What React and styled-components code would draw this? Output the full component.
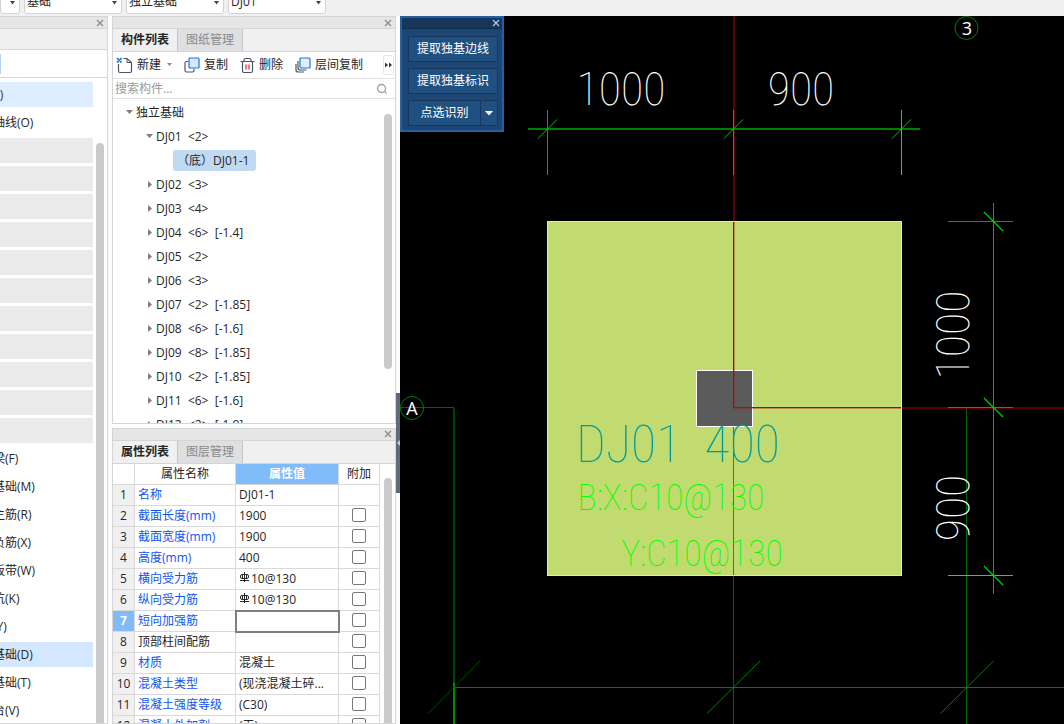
import React, { useState } from "react";
import styled, { createGlobalStyle, css } from "styled-components";

const GlobalStyle = createGlobalStyle`
  * {
    box-sizing: border-box;
  }
  body {
    margin: 0;
    background-color: #fdfdfd;
    color: #262626;
    font-family: "Open Sans", "Noto Sans CJK SC", sans-serif;
    font-size: 12px;
  }
  button, input, select {
    font: inherit;
    color: inherit;
    margin: 0;
    padding: 0;
  }
`;

const Pagina = styled.div`
  display: flex;
  flex-direction: column;
  height: 100vh;
  overflow: hidden;
`;

const BarraSuperior = styled.header`
  display: flex;
  align-items: flex-end;
  gap: 4px;
  height: 16px;
  flex-shrink: 0;
  padding-bottom: 2px;
  background-color: #f0f0f0;
  overflow: hidden;
`;

const Combo = styled.label`
  position: relative;
  width: ${({ $corto }) => ($corto ? "20px" : "98px")};
  height: 24px;
  flex-shrink: 0;
`;

const ComboSelect = styled.select`
  appearance: none;
  width: 100%;
  height: 24px;
  padding-left: 2px;
  line-height: 22px;
  border: 1px solid #d4d4d4;
  border-radius: 3px;
  background-color: white;
`;

const ComboFlecha = styled.svg`
  position: absolute;
  right: 5px;
  top: 11px;
  pointer-events: none;
`;

const Cuerpo = styled.div`
  display: flex;
  flex: 1;
  min-height: 0;
`;

const Navegador = styled.nav`
  display: flex;
  flex-direction: column;
  width: 108px;
  flex-shrink: 0;
  margin-right: 4px;
  border: 1px solid #d5d5d5;
  border-left: none;
  background-color: white;
`;

const FranjaTitulo = styled.div`
  display: flex;
  align-items: center;
  justify-content: flex-end;
  height: 11px;
  padding-right: 3px;
  flex-shrink: 0;
  background-color: #e6e6e6;
`;

const BotonCerrar = styled.button`
  display: flex;
  border: none;
  background: none;
  color: ${({ $color }) => $color || "#8c8c8c"};
`;

const FranjaGris = styled.div`
  height: 22px;
  flex-shrink: 0;
  border-top: 1px solid #d5d5d5;
  border-bottom: 1px solid #d5d5d5;
  background-color: #f0f0f0;
`;

const FranjaModo = styled.div`
  display: flex;
  align-items: center;
  height: 28px;
  flex-shrink: 0;
  border-bottom: 1px solid #d5d5d5;
`;

const Modo = styled.span`
  width: 1px;
  height: 20px;
  background-color: #b5d3f3;
`;

const ZonaLista = styled.div`
  display: flex;
  flex: 1;
  min-height: 0;
  overflow: hidden;
`;

const ListaNav = styled.ul`
  display: flex;
  flex-direction: column;
  gap: 3px;
  flex: 1;
  margin: 0;
  padding: 4px 0 0;
  list-style: none;
`;

const ItemNav = styled.li`
  height: 25px;
  flex-shrink: 0;
  line-height: 25px;
  text-indent: -7px;
  white-space: nowrap;
  overflow: hidden;
  background-color: ${({ $tipo }) =>
    ({ grupo: "#ebebeb", abierto: "#deedff", activo: "#d3e7ff" })[$tipo] || "white"};
  color: ${({ $tipo }) => ($tipo === "abierto" ? "#1d3557" : "#262626")};
`;

const Carril = styled.div`
  width: ${({ $ancho }) => $ancho || "11px"};
  flex-shrink: 0;
  padding: ${({ $arriba }) => $arriba}px 3px 0 0;
  display: flex;
  justify-content: flex-end;
`;

const Pulgar = styled.div`
  width: 8px;
  height: ${({ $alto }) => $alto || "calc(100% + 8px)"};
  border-radius: 4px;
  background-color: #cacaca;
`;

const Columna = styled.div`
  display: flex;
  flex-direction: column;
  gap: 4px;
  width: 284px;
  flex-shrink: 0;
`;

const Panel = styled.section`
  display: flex;
  flex-direction: column;
  min-height: 0;
  flex: ${({ $flex }) => $flex};
  border: 1px solid #d5d5d5;
  background-color: white;
  overflow: hidden;
`;

const Pestanas = styled.div`
  display: flex;
  height: 24px;
  flex-shrink: 0;
  border-top: 1px solid #d5d5d5;
  border-bottom: 1px solid #d5d5d5;
  background-color: #f0f0f0;
`;

const Pestana = styled.button`
  width: 65px;
  border: none;
  border-right: 1px solid #c4c6cc;
  background-color: ${({ $activa }) => ($activa ? "#f0f0f0" : "#dedfe1")};
  color: ${({ $activa }) => ($activa ? "#262626" : "#8a8a8a")};
  font-weight: ${({ $activa }) => ($activa ? 700 : 400)};
  line-height: 20px;
`;

const Herramientas = styled.div`
  display: flex;
  align-items: center;
  height: 27px;
  flex-shrink: 0;
  padding-left: 3px;
  border-bottom: 1px solid #e0e0e0;
`;

const Accion = styled.button`
  display: flex;
  align-items: center;
  gap: 4px;
  border: none;
  background: none;
  margin-right: 12px;
  line-height: 22px;
  white-space: nowrap;
`;

const BotonMas = styled.button`
  display: flex;
  align-items: center;
  justify-content: center;
  width: 11px;
  height: 20px;
  margin-left: auto;
  margin-right: 1px;
  border: 1px solid #e4e4e4;
  border-radius: 3px;
  background-color: white;
`;

const Buscador = styled.label`
  display: flex;
  align-items: center;
  height: 20px;
  flex-shrink: 0;
  padding: 0 7px 0 2px;
  border-bottom: 1px solid #e0e0e0;
`;

const CampoBusqueda = styled.input`
  flex: 1;
  min-width: 0;
  height: 18px;
  border: none;
  outline: none;
  background: none;
  &::placeholder {
    color: #9a9a9a;
    opacity: 1;
  }
`;

const Arbol = styled.ul`
  flex: 1;
  margin: 0;
  padding: 1px 0 0;
  list-style: none;
  white-space: pre;
`;

const Nodo = styled.li`
  display: flex;
  align-items: center;
  gap: 3px;
  height: 24px;
  padding-left: ${({ $nivel }) => 13 + $nivel * 20}px;
`;

const Marcado = styled.span`
  height: 21px;
  margin-left: 7px;
  padding: 0 7px 0 4px;
  border-radius: 3px;
  background-color: #c2d9f2;
  line-height: 21px;
`;

const Tabla = styled.table`
  flex: 1;
  width: 267px;
  border-collapse: separate;
  border-spacing: 0;
  table-layout: fixed;
  align-self: flex-start;
`;

const borde = css`
  border-right: 1px solid #d9d9d9;
  border-bottom: 1px solid #d9d9d9;
`;

const Encabezado = styled.th`
  ${borde}
  width: ${({ $ancho }) => $ancho};
  height: 21px;
  padding: 0;
  line-height: 18px;
  font-weight: ${({ $activo }) => ($activo ? 700 : 400)};
  color: ${({ $activo }) => ($activo ? "white" : "#262626")};
  background-color: ${({ $activo }) => ($activo ? "#80bbfa" : "white")};
`;

const Numero = styled.th`
  ${borde}
  height: 21px;
  padding: 0;
  line-height: 18px;
  font-weight: ${({ $activo }) => ($activo ? 700 : 400)};
  color: ${({ $activo }) => ($activo ? "white" : "#262626")};
  background-color: ${({ $activo }) => ($activo ? "#80bbfa" : "#f0f0f0")};
`;

const Celda = styled.td`
  ${borde}
  height: 21px;
  padding: 0 3px;
  line-height: 18px;
  white-space: nowrap;
  overflow: hidden;
  color: ${({ $azul }) => ($azul ? "#0f55f5" : "#262626")};
  ${({ $foco }) => $foco && "outline: 2px solid #7f7f7f; outline-offset: -1px;"}
`;

const CeldaCasilla = styled(Celda)`
  padding: 0 0 1px;
`;

const Casilla = styled.input`
  appearance: none;
  display: block;
  width: 14px;
  height: 14px;
  margin: 0 auto;
  border: 1px solid #777777;
  border-radius: 2px;
  background-color: white;
`;

const Varilla = styled.svg`
  margin-right: 1px;
  vertical-align: top;
`;

const Canal = styled.div`
  width: 4px;
  flex-shrink: 0;
`;

const Plegar = styled.button`
  display: flex;
  align-items: center;
  justify-content: flex-end;
  width: 4px;
  height: 100px;
  margin-top: 377px;
  border: none;
  background-color: #5f6b78;
`;

const Lienzo = styled.main`
  position: relative;
  flex: 1;
  min-width: 0;
  overflow: hidden;
  background-color: black;
`;

const Dibujo = styled.svg`
  position: absolute;
  inset: 0;
  width: 100%;
  height: 100%;
`;

const TextoPlano = styled.text`
  font-family: "Roboto Condensed", "Liberation Sans Narrow", Roboto, sans-serif;
  font-weight: 100;
  font-size: ${({ $size }) => $size}px;
  text-anchor: middle;
  white-space: pre;
`;

const TextoEje = styled.text`
  font-family: "Open Sans", sans-serif;
  font-size: 18px;
  text-anchor: middle;
  fill: white;
`;

const Flotante = styled.aside`
  position: absolute;
  left: 0;
  top: 0;
  width: 104px;
  border: 2px solid #2361a0;
  background-color: #1d4675;
`;

const FlotanteTitulo = styled.div`
  display: flex;
  align-items: center;
  justify-content: flex-end;
  height: 11px;
  padding-right: 2px;
  background-color: #17365a;
  border-bottom: 1px solid #122c4a;
`;

const FlotanteCuerpo = styled.div`
  display: flex;
  flex-direction: column;
  gap: 6px;
  padding: 7px 4px 4px 6px;
`;

const BotonFlotante = styled.button`
  height: 26px;
  border: 1px solid #17365a;
  background-color: #1f5080;
  color: white;
  line-height: 22px;
`;

const BotonDividido = styled.div`
  display: grid;
  grid-template-columns: 1fr 17px;
`;

const BotonFlecha = styled(BotonFlotante)`
  border-left: none;
  display: flex;
  align-items: center;
  justify-content: center;
`;

const GRUPOS = Array.from({ length: 11 }, () => ({ tipo: "grupo" }));

const NAVEGACION = [
  { texto: "(J)", tipo: "abierto" },
  { texto: "轴线(O)" },
  ...GRUPOS,
  { texto: "梁(F)" },
  { texto: "基础(M)" },
  { texto: "主筋(R)" },
  { texto: "负筋(X)" },
  { texto: "板带(W)" },
  { texto: "坑(K)" },
  { texto: "(Y)" },
  { texto: "基础(D)", tipo: "activo" },
  { texto: "基础(T)" },
  { texto: "台(V)" },
];

const COMPONENTES = [
  "DJ02  <3>",
  "DJ03  <4>",
  "DJ04  <6>  [-1.4]",
  "DJ05  <2>",
  "DJ06  <3>",
  "DJ07  <2>  [-1.85]",
  "DJ08  <6>  [-1.6]",
  "DJ09  <8>  [-1.85]",
  "DJ10  <2>  [-1.85]",
  "DJ11  <6>  [-1.6]",
  "DJ12  <2>  [-1.9]",
];

const PROPIEDADES = [
  { nombre: "名称", valor: "DJ01-1", azul: true, sinCasilla: true },
  { nombre: "截面长度(mm)", valor: "1900", azul: true },
  { nombre: "截面宽度(mm)", valor: "1900", azul: true },
  { nombre: "高度(mm)", valor: "400", azul: true },
  { nombre: "横向受力筋", valor: "10@130", azul: true, acero: true },
  { nombre: "纵向受力筋", valor: "10@130", azul: true, acero: true },
  { nombre: "短向加强筋", valor: "", azul: true, foco: true },
  { nombre: "顶部柱间配筋", valor: "" },
  { nombre: "材质", valor: "混凝土", azul: true },
  { nombre: "混凝土类型", valor: "(现浇混凝土碎...", azul: true },
  { nombre: "混凝土强度等级", valor: "(C30)", azul: true },
  { nombre: "混凝土外加剂", valor: "(无)", azul: true },
];

function Cerrar({ color }) {
  return (
    <BotonCerrar $color={color} aria-label="关闭">
      <svg width="8" height="8" viewBox="0 0 8 8" stroke="currentColor" strokeWidth="1.3">
        <path d="M1 1 7 7M7 1 1 7" />
      </svg>
    </BotonCerrar>
  );
}

function Triangulo({ abierto }) {
  return (
    <svg width="7" height="8" viewBox="0 0 7 8" fill="#7f7f7f">
      <path d={abierto ? "M0 2h7L3.5 6z" : "M2 1v7l4-3.5z"} />
    </svg>
  );
}

function IconoNuevo() {
  return (
    <svg width="17" height="17" viewBox="0 0 17 17" fill="none" stroke="#4c5563">
      <path d="M2.5 7v7q0 1.500 1.500 1.500h10q1.500 0 1.500-1.500V5.500L11 1.500H7.500" strokeWidth="1.200" />
      <path d="M11 1.500v4h4.500" />
      <path
        d="M1 1h1.500v1.500H1zM4 1h1.500v1.500H4zM2.500 2.500H4V4H2.500zM1 4h1.500v1.500H1zM4 4h1.500v1.500H4z"
        fill="#1673dd"
        stroke="#1673dd"
        strokeWidth=".4"
      />
    </svg>
  );
}

function IconoCopiar() {
  return (
    <svg width="16" height="16" viewBox="0 0 16 16" fill="none" strokeWidth="1.200">
      <path d="M4 4.500H2.500q-1.500 0-1.500 1.500v7.500Q1 15 2.500 15h6q1.500 0 1.500-1.500V12" stroke="#4c5563" />
      <rect x="5" y="1" width="10" height="10" rx="1" fill="#d6e8fd" stroke="#1673dd" />
    </svg>
  );
}

function IconoBorrar() {
  return (
    <svg width="15" height="17" viewBox="0 0 15 17" fill="none" stroke="#4c5563" strokeWidth="1.200">
      <path d="M.5 4.500h14M4 4.500V3q0-1.500 1.500-1.500h4Q11 1.500 11 3v1.500M2.500 4.500V14q0 1.500 1.500 1.500h7q1.500 0 1.500-1.500V4.500" />
      <path d="M6 7.500v5M9 7.500v5" stroke="#e02020" />
    </svg>
  );
}

function IconoCapas() {
  return (
    <svg width="16" height="16" viewBox="0 0 16 16" fill="none" strokeWidth="1.200">
      <path d="M1 7v6q0 2 2 2h6M3 4v7q0 2 2 2h6.500" stroke="#4c5563" />
      <rect x="5" y="1" width="10" height="10" rx="1" fill="#e4effd" stroke="#1673dd" />
    </svg>
  );
}

function Acero() {
  return (
    <Varilla width="11" height="15" viewBox="0 -2 11 15" fill="none" stroke="#262626">
      <path d="M5.500 0v10M1 8.500h9M3 2.500h5q1.500 0 1.500 1.500v1q0 1.500-1.500 1.500H3Q1.500 6.500 1.500 5V4Q1.500 2.500 3 2.500M3.500 2.500v4M7.500 2.500v4" />
    </Varilla>
  );
}

function Plano() {
  return (
    <Dibujo viewBox="400 16 664 708" preserveAspectRatio="xMinYMin slice" fill="none">
      {/* ejes del plano */}
      <path d="M454 408v276" stroke="#004600" strokeWidth="2" />
      <path d="M454 683v41" stroke="#008a00" strokeWidth="2" />
      <path d="M400 407.500h54" stroke="#006400" />
      <path d="M966.500 408v316M733.500 576v148" stroke="#006400" />
      <path d="M454 687.500h610" stroke="#008000" />
      <path d="M707 713.500l53-52.500M940.500 713.500l53-52.500" stroke="#008000" />
      <path d="M428 713.500l52-52.500" stroke="#005000" />
      <path d="M734 16v205M902 408h162" stroke="#5c0000" strokeWidth="2" />

      {/* cotas */}
      <path d="M528 129h392" stroke="#008000" strokeWidth="2" />
      <path d="M547.500 110v65M733.500 110v65" stroke="#00b400" />
      <path d="M901.500 110v65" stroke="#00f000" />
      <path d="M538 138.500l19-19M724 138.500l19-19M892 138.500l19-19" stroke="#00c800" />
      <path d="M993.500 203v391" stroke="#00b400" />
      <path d="M948 221.500h65M948 407.500h65" stroke="#00a800" />
      <path d="M948 575.500h65" stroke="#00f000" />
      <path d="M984 212l19 19M984 398l19 19M984 566l19 19" stroke="#00d000" strokeWidth="1.200" />

      {/* zapata y columna */}
      <rect x="547.500" y="221.500" width="354" height="354" fill="#c1db70" stroke="#ffff00" />
      <path d="M733.500 427v148" stroke="#2f8f10" />
      <rect x="696.500" y="370.500" width="56" height="56" fill="#5b5b5b" stroke="white" />
      <path d="M734 222v186M733 408h168" stroke="#a01818" strokeOpacity=".4" strokeWidth="2" />
      <path d="M733.500 222v186M733 407.500h168" stroke="#981414" />

      <g fill="white">
        <TextoPlano $size={46} x="621" y="105">1000</TextoPlano>
        <TextoPlano $size={46} x="801" y="105">900</TextoPlano>
        <TextoPlano $size={46} transform="translate(969 335) rotate(-90)">1000</TextoPlano>
        <TextoPlano $size={46} transform="translate(969 508) rotate(-90)">900</TextoPlano>
      </g>
      <TextoPlano $size={52} x="678" y="462" fill="#009c9c">DJ01  400</TextoPlano>
      <TextoPlano $size={36} x="671" y="510" fill="#00ff00">B:X:C10@130</TextoPlano>
      <TextoPlano $size={36} x="702" y="566" fill="#00ff00">Y:C10@130</TextoPlano>

      <circle cx="966.500" cy="28" r="11.500" stroke="#008000" />
      <circle cx="412" cy="408" r="11.500" stroke="#008000" />
      <TextoEje x="967" y="35">3</TextoEje>
      <TextoEje x="412" y="415">A</TextoEje>
    </Dibujo>
  );
}

function ComboBox({ texto, nombre, corto }) {
  return (
    <Combo $corto={corto}>
      <ComboSelect aria-label={nombre} defaultValue={texto}>
        <option>{texto}</option>
      </ComboSelect>
      <ComboFlecha width="5" height="4" viewBox="0 0 5 4" fill="#444">
        <path d="M0 0h5L2.500 3.500z" />
      </ComboFlecha>
    </Combo>
  );
}

export default function App() {
  const [busqueda, setBusqueda] = useState("");

  return (
    <>
      <GlobalStyle />
      <Pagina>
        <BarraSuperior>
          <ComboBox corto texto="" nombre="楼层" />
          <ComboBox texto="基础" nombre="类别" />
          <ComboBox texto="独立基础" nombre="类型" />
          <ComboBox texto="DJ01" nombre="构件" />
        </BarraSuperior>
        <Cuerpo>
          <Navegador>
            <FranjaTitulo>
              <Cerrar />
            </FranjaTitulo>
            <FranjaGris />
            <FranjaModo>
              <Modo />
            </FranjaModo>
            <ZonaLista>
              <ListaNav>
                {NAVEGACION.map((item, i) => (
                  <ItemNav key={i} $tipo={item.tipo}>
                    {item.texto}
                  </ItemNav>
                ))}
              </ListaNav>
              <Carril $ancho="14px" $arriba={65}>
                <Pulgar />
              </Carril>
            </ZonaLista>
          </Navegador>

          <Columna>
            <Panel $flex="408 1 0">
              <FranjaTitulo>
                <Cerrar />
              </FranjaTitulo>
              <Pestanas>
                <Pestana $activa>构件列表</Pestana>
                <Pestana>图纸管理</Pestana>
              </Pestanas>
              <Herramientas>
                <Accion>
                  <IconoNuevo />
                  新建
                  <svg width="7" height="4" viewBox="0 0 7 4" fill="#8a8a8a">
                    <path d="M2 0h5L4.500 3z" />
                  </svg>
                </Accion>
                <Accion>
                  <IconoCopiar />
                  复制
                </Accion>
                <Accion>
                  <IconoBorrar />
                  删除
                </Accion>
                <Accion>
                  <IconoCapas />
                  层间复制
                </Accion>
                <BotonMas aria-label="更多">
                  <svg width="8" height="6" viewBox="0 0 8 6" fill="#333">
                    <path d="M0 .5v5l3-2.500zM4 .5v5l3-2.500z" />
                  </svg>
                </BotonMas>
              </Herramientas>
              <Buscador>
                <CampoBusqueda
                  placeholder="搜索构件..."
                  value={busqueda}
                  onChange={(e) => setBusqueda(e.target.value)}
                />
                <svg width="12" height="12" viewBox="0 0 12 12" fill="none" stroke="#a0a0a0" strokeWidth="1.300">
                  <circle cx="5.500" cy="5.500" r="4" />
                  <path d="M8.500 8.500l2 2" />
                </svg>
              </Buscador>
              <ZonaLista>
                <Arbol>
                  <Nodo $nivel={0}>
                    <Triangulo abierto />
                    独立基础
                  </Nodo>
                  <Nodo $nivel={1}>
                    <Triangulo abierto />
                    {"DJ01  <2>"}
                  </Nodo>
                  <Nodo $nivel={2}>
                    <Marcado>（底）DJ01-1</Marcado>
                  </Nodo>
                  {COMPONENTES.map((texto) => (
                    <Nodo key={texto} $nivel={1}>
                      <Triangulo />
                      {texto}
                    </Nodo>
                  ))}
                </Arbol>
                <Carril $arriba={15}>
                  <Pulgar $alto="255px" />
                </Carril>
              </ZonaLista>
            </Panel>

            <Panel $flex="296 1 0">
              <FranjaTitulo>
                <Cerrar />
              </FranjaTitulo>
              <Pestanas>
                <Pestana $activa>属性列表</Pestana>
                <Pestana>图层管理</Pestana>
              </Pestanas>
              <ZonaLista>
                <Tabla>
                  <thead>
                    <tr>
                      <Encabezado $ancho="22px" />
                      <Encabezado $ancho="101px">属性名称</Encabezado>
                      <Encabezado $ancho="103px" $activo>
                        属性值
                      </Encabezado>
                      <Encabezado $ancho="41px">附加</Encabezado>
                    </tr>
                  </thead>
                  <tbody>
                    {PROPIEDADES.map((p, i) => (
                      <tr key={p.nombre}>
                        <Numero $activo={p.foco}>{i + 1}</Numero>
                        <Celda $azul={p.azul}>{p.nombre}</Celda>
                        <Celda $foco={p.foco}>
                          {p.acero && <Acero />}
                          {p.valor}
                        </Celda>
                        <CeldaCasilla>
                          {!p.sinCasilla && <Casilla type="checkbox" aria-label={p.nombre} />}
                        </CeldaCasilla>
                      </tr>
                    ))}
                  </tbody>
                </Tabla>
                <Carril $ancho="15px" $arriba={14}>
                  <Pulgar />
                </Carril>
              </ZonaLista>
            </Panel>
          </Columna>

          <Canal>
            <Plegar aria-label="收起">
              <svg width="3" height="6" viewBox="0 0 3 6" fill="#c8ccd2">
                <path d="M3 0v6L0 3z" />
              </svg>
            </Plegar>
          </Canal>

          <Lienzo>
            <Plano />
            <Flotante>
              <FlotanteTitulo>
                <Cerrar color="#a9cbf0" />
              </FlotanteTitulo>
              <FlotanteCuerpo>
                <BotonFlotante>提取独基边线</BotonFlotante>
                <BotonFlotante>提取独基标识</BotonFlotante>
                <BotonDividido>
                  <BotonFlotante>点选识别</BotonFlotante>
                  <BotonFlecha aria-label="更多选项">
                    <svg width="8" height="5" viewBox="0 0 8 5" fill="white">
                      <path d="M0 0h8L4 4.500z" />
                    </svg>
                  </BotonFlecha>
                </BotonDividido>
              </FlotanteCuerpo>
            </Flotante>
          </Lienzo>
        </Cuerpo>
      </Pagina>
    </>
  );
}
